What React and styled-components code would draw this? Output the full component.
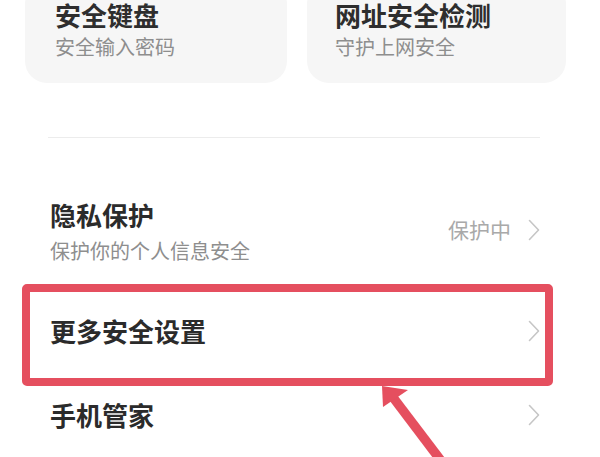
import React from 'react';
import styled, { createGlobalStyle } from 'styled-components';

const GlobalStyle = createGlobalStyle`
    html, body {
        margin: 0;
        padding: 0;
        background: #ffffff;
    }

    body {
        font-family: 'Noto Sans CJK SC', 'Noto Sans', sans-serif;
        overflow: hidden;
    }
`;

const Page = styled.div`
    position: relative;
    width: 600px;
    height: 457px;
    overflow: hidden;
    background: #ffffff;
`;

const CardRow = styled.div`
    display: grid;
    grid-template-columns: 262px 259px;
    gap: 20px;
    margin-top: -18px;
    padding-left: 25px;
`;

const Card = styled.div`
    background: #f6f6f6;
    border-radius: 22px;
    padding: 20px 0 26px ${(p) => p.$inset}px;
`;

const CardTitle = styled.div`
    font-size: 26px;
    line-height: 1;
    font-weight: 700;
    color: #2e2e2e;
`;

const CardSub = styled.div`
    margin-top: 9px;
    font-size: 20px;
    line-height: 1;
    color: #8e8e8e;
`;

const Divider = styled.div`
    height: 1px;
    background: #ececec;
    margin: 54px 60px 36px 48px;
`;

const Row = styled.div`
    position: relative;
    display: flex;
    align-items: center;
    justify-content: space-between;
    box-sizing: border-box;
    padding: ${(p) => (p.$tall ? '28px' : '0')} 60px ${(p) => (p.$tall ? '28px' : '0')} 50px;
    height: ${(p) => (p.$tall ? 'auto' : '84px')};
`;

const RowText = styled.div`
    display: flex;
    flex-direction: column;
`;

const RowTitle = styled.div`
    font-size: 26px;
    line-height: 1;
    font-weight: 700;
    color: #2b2b2b;
`;

const RowSub = styled.div`
    margin-top: 13px;
    font-size: 20px;
    line-height: 1;
    color: #8e8e8e;
`;

const RowRight = styled.div`
    display: flex;
    align-items: center;
    gap: 17px;
    margin-top: -4px;
`;

const Status = styled.span`
    font-size: 21px;
    line-height: 1;
    color: #a9a9a9;
`;

const Highlight = styled.div`
    position: absolute;
    top: -5px;
    bottom: -13px;
    left: 22px;
    right: 47px;
    border: 8px solid #e54f5f;
    border-radius: 5px;
    pointer-events: none;
`;

const Pointer = styled.svg`
    position: absolute;
    left: 370px;
    top: 380px;
`;

const Chevron = () => (
    <svg width="12" height="22" viewBox="0 0 12 22">
        <polyline
            points="1.5,1.5 10.5,11 1.5,20.5"
            fill="none"
            stroke="#c6c6c6"
            strokeWidth="1.6"
            strokeLinecap="round"
            strokeLinejoin="round"
        />
    </svg>
);

const App = () => (
    <Page>
        <GlobalStyle />
        <CardRow>
            <Card $inset={30}>
                <CardTitle>安全键盘</CardTitle>
                <CardSub>安全输入密码</CardSub>
            </Card>
            <Card $inset={28}>
                <CardTitle>网址安全检测</CardTitle>
                <CardSub>守护上网安全</CardSub>
            </Card>
        </CardRow>

        <Divider />

        <Row $tall>
            <RowText>
                <RowTitle>隐私保护</RowTitle>
                <RowSub>保护你的个人信息安全</RowSub>
            </RowText>
            <RowRight>
                <Status>保护中</Status>
                <Chevron />
            </RowRight>
        </Row>

        <Row>
            <RowTitle>更多安全设置</RowTitle>
            <Chevron />
            <Highlight />
        </Row>

        <Row>
            <RowTitle>手机管家</RowTitle>
            <Chevron />
        </Row>

        <Pointer width="90" height="80" viewBox="0 0 90 80">
            <line x1="22" y1="16" x2="72" y2="82" stroke="#e54f5f" strokeWidth="9.5" />
            <polygon points="12,6 13,27 38,10" fill="#e54f5f" />
        </Pointer>
    </Page>
);

export default App;
